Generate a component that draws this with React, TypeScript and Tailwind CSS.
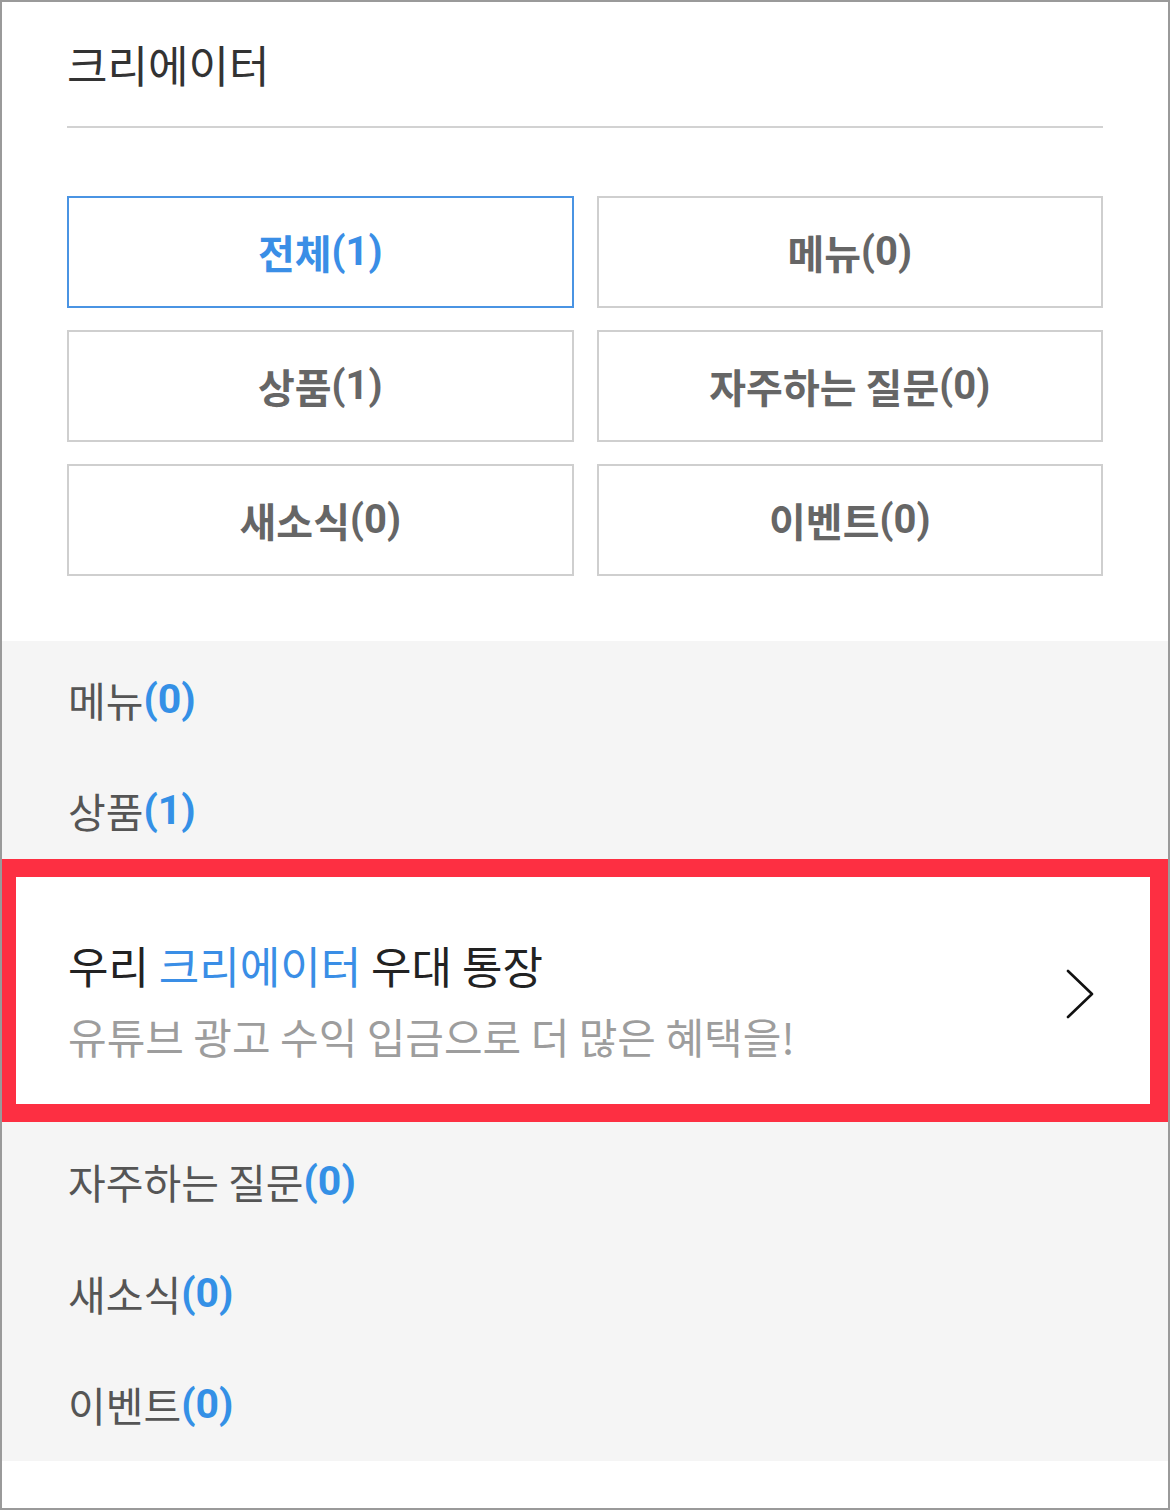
const font = { fontFamily: "'Noto Sans CJK KR', 'Noto Sans', sans-serif" };
const num = { fontFamily: "Roboto, 'Noto Sans CJK KR', sans-serif" };

const tabs = [
  { label: "전체", count: 1, active: true },
  { label: "메뉴", count: 0 },
  { label: "상품", count: 1 },
  { label: "자주하는 질문", count: 0 },
  { label: "새소식", count: 0 },
  { label: "이벤트", count: 0 },
];

function Item({ label, count, className = "" }: { label: string; count: number; className?: string }) {
  return (
    <div className={`px-[66px] ${className}`}>
      <div className="h-[41px] flex items-center text-[41px] leading-[41px] text-[#555555] whitespace-nowrap">
        {label}
        <span style={num} className="font-bold text-[#3490e6]">({count})</span>
      </div>
    </div>
  );
}

export default function App() {
  return (
    <div style={font} className="w-[1170px] h-[1510px] border-2 border-[#9a9a9a] bg-white overflow-hidden">
      {/* header */}
      <div className="px-[65px] pt-[40px]">
        <h1 className="text-[44px] leading-[44px] font-normal text-[#333333]">크리에이터</h1>
        <div className="mt-[40px] h-[2px] bg-[#d2d2d2]" />

        <div className="mt-[68px] grid grid-cols-2 gap-x-[23px] gap-y-[22px]">
          {tabs.map((t) => (
            <button
              key={t.label}
              className={`h-[112px] border-2 flex items-center justify-center text-[40px] font-bold ${
                t.active ? "border-[#4a94e3] text-[#3a8ee6]" : "border-[#cfcfcf] text-[#666666]"
              }`}
            >
              {t.label}
              <span style={num}>({t.count})</span>
            </button>
          ))}
        </div>
      </div>

      {/* list */}
      <div className="mt-[65px] bg-[#f5f5f5] pb-[36px]">
        <Item label="메뉴" count={0} className="pt-[38px]" />
        <Item label="상품" count={1} className="mt-[70px]" />

        <div className="mt-[28px] bg-white border-t-[18px] border-b-[18px] border-l-[14px] border-r-[18px] border-[#fd2f42] h-[263px] flex justify-between">
          <div className="pl-[52px] pt-[66px]">
            <div className="text-[44px] leading-[44px] text-[#222222]">
              우리 <span className="text-[#3a8ee6]">크리에이터</span> 우대 통장
            </div>
            <div className="mt-[28px] text-[42px] leading-[42px] text-[#9d9d9d]">
              유튜브 광고 수익 입금으로 더 많은 혜택을!
            </div>
          </div>
          <svg width="30" height="52" viewBox="0 0 30 52" className="self-center mr-[55px] mt-[6px]">
            <path d="M3 3 L27 26 L3 49" fill="none" stroke="#111111" strokeWidth="2.6" strokeLinecap="round" strokeLinejoin="round" />
          </svg>
        </div>

        <Item label="자주하는 질문" count={0} className="pt-[39px]" />
        <Item label="새소식" count={0} className="mt-[71px]" />
        <Item label="이벤트" count={0} className="mt-[70px]" />
      </div>
    </div>
  );
}
